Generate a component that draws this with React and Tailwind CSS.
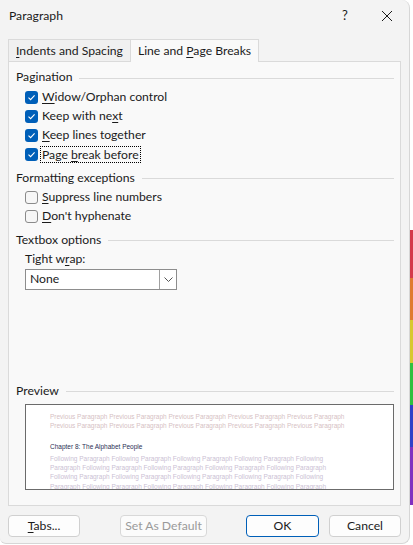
import React from "react";

const F = { fontFamily: 'Lato, "Noto Sans", sans-serif' };

function Check({ checked }) {
  if (checked) {
    return (
      <div className="w-[13px] h-[13px] rounded-[3px] bg-[#005fb8] flex items-center justify-center shrink-0">
        <svg width="9" height="9" viewBox="0 0 9 9">
          <path d="M1.5 4.6 L3.6 6.6 L7.6 2.3" fill="none" stroke="white" strokeWidth="1.1" />
        </svg>
      </div>
    );
  }
  return <div className="w-[13px] h-[13px] rounded-[3px] border border-[#8a8a8a] bg-[#f6f6f6] shrink-0" />;
}

function U({ children }) {
  return <span className="underline underline-offset-[2px]">{children}</span>;
}

function Row({ checked, children, focus }) {
  return (
    <div className="h-[19px] flex items-center pl-[9px] gap-[3px]">
      <Check checked={checked} />
      <span className={focus ? "outline outline-1 outline-dotted outline-black px-[1px] leading-[15px]" : "px-[1px]"}>{children}</span>
    </div>
  );
}

function Header({ children, className = "" }) {
  return (
    <div className={"flex items-center gap-[7px] " + className}>
      <span>{children}</span>
      <div className="flex-1 h-px bg-[#dadada] mt-[1px]" />
    </div>
  );
}

const prev = "Previous Paragraph Previous Paragraph Previous Paragraph Previous Paragraph Previous Paragraph";

export default function App() {
  return (
    <div className="w-[413px] h-[545px] bg-white flex relative overflow-hidden" style={F}>
      <div className="w-[410px] h-[544px] bg-[#f3f3f3] rounded-tr-[8px] rounded-br-[8px] rounded-bl-[6px] border-r border-b border-[#d6d6d6] text-[12.2px] text-[#1b1b1b] flex flex-col">
        <div className="h-[32px] flex items-center pl-[9px] pr-[16px]">
          <span className="flex-1">Paragraph</span>
          <span className="w-[30px] text-center mr-[21px] text-[13px]">?</span>
          <svg width="12" height="12" viewBox="0 0 12 12">
            <path d="M1 1 L11 11 M11 1 L1 11" stroke="#1b1b1b" strokeWidth="1" />
          </svg>
        </div>
        <div className="h-[6px]" />
        <div className="flex pl-[8px] h-[23px] items-end relative z-10">
          <div className="w-[122px] h-[22px] border-t border-l border-[#dadada] bg-[#f0f0f0] flex items-center justify-center pt-[2px]">
            <span><U>I</U>ndents and Spacing</span>
          </div>
          <div className="w-[129px] h-[23px] border-t border-l border-r border-[#dadada] bg-[#f9f9f9] flex items-center justify-center -mb-px">
            <span>Line and <U>P</U>age Breaks</span>
          </div>
        </div>
        <div className="mx-[8px] h-[445px] border border-[#dadada] bg-[#f9f9f9] pl-[7px] pr-[6px] pt-[5px] flex flex-col">
          <Header className="h-[21px]">Pagination</Header>
          <Row checked><U>W</U>idow/Orphan control</Row>
          <Row checked>Keep with ne<U>x</U>t</Row>
          <Row checked><U>K</U>eep lines together</Row>
          <Row checked focus>Page <U>b</U>reak before</Row>
          <Header className="h-[20px] mt-[4px]">Formatting exceptions</Header>
          <Row><U>S</U>uppress line numbers</Row>
          <Row><U>D</U>on't hyphenate</Row>
          <Header className="h-[20px] mt-[4px]">Textbox options</Header>
          <div className="h-[19px] flex items-center pl-[9px]">Tight w<U>r</U>ap:</div>
          <div className="ml-[9px] w-[152px] h-[21px] border border-[#8d8d8d] bg-white flex items-center">
            <span className="flex-1 pl-[4px]">None</span>
            <div className="w-[17px] h-full border-l border-[#a0a0a0] flex items-center justify-center">
              <svg width="9" height="6" viewBox="0 0 9 6">
                <path d="M0.5 0.5 L4.5 4.5 L8.5 0.5" fill="none" stroke="#555" strokeWidth="1" />
              </svg>
            </div>
          </div>
          <div className="h-[91px]" />
          <Header className="h-[20px]">Preview</Header>
          <div className="mt-[3px] ml-[9px] h-[86px] border border-[#6b6b6b] bg-white pl-[24px] pt-[7px] overflow-hidden text-[6.5px] leading-[9.3px]" style={{ fontFamily: '"Liberation Sans", sans-serif' }}>
            <div className="text-[#d6bfc4] whitespace-nowrap">{prev}</div>
            <div className="text-[#d6bfc4] whitespace-nowrap">{prev}</div>
            <div className="h-[11px]" />
            <div className="text-[#2a2f55]">Chapter 8: The Alphabet People</div>
            <div className="h-[3px]" />
            <div className="text-[#cbbfd4] whitespace-nowrap">Following Paragraph Following Paragraph Following Paragraph Following Paragraph Following</div>
            <div className="text-[#cbbfd4] whitespace-nowrap">Paragraph Following Paragraph Following Paragraph Following Paragraph Following Paragraph</div>
            <div className="text-[#cbbfd4] whitespace-nowrap">Following Paragraph Following Paragraph Following Paragraph Following Paragraph Following</div>
            <div className="text-[#cbbfd4] whitespace-nowrap">Paragraph Following Paragraph Following Paragraph Following Paragraph Following Paragraph</div>
          </div>
        </div>
        <div className="flex items-center h-[30px] mt-[5px] px-[8px]">
          <button className="w-[73px] h-[22px] rounded-[4px] border border-[#d0d0d0] bg-[#fdfdfd]"><U>T</U>abs...</button>
          <button className="ml-[40px] w-[88px] h-[22px] rounded-[4px] border border-[#d8d8d8] bg-[#fbfbfb] text-[#9a9a9a]">Set As Default</button>
          <button className="ml-[39px] w-[74px] h-[22px] rounded-[4px] border border-[#005fb8] bg-[#fdfdfd]">OK</button>
          <button className="ml-[10px] w-[73px] h-[22px] rounded-[4px] border border-[#d0d0d0] bg-[#fdfdfd]">Cancel</button>
        </div>
      </div>
      <div className="w-[3px] h-full flex flex-col">
        <div className="h-[230px] bg-white" />
        <div className="h-[48px] bg-[#d43a4a]" />
        <div className="h-[42px] bg-[#e07a30]" />
        <div className="h-[43px] bg-[#d8c830]" />
        <div className="h-[42px] bg-[#30c040]" />
        <div className="h-[42px] bg-[#3040c8]" />
        <div className="h-[58px] bg-[#8030c0]" />
        <div className="flex-1 bg-white" />
      </div>
    </div>
  );
}
